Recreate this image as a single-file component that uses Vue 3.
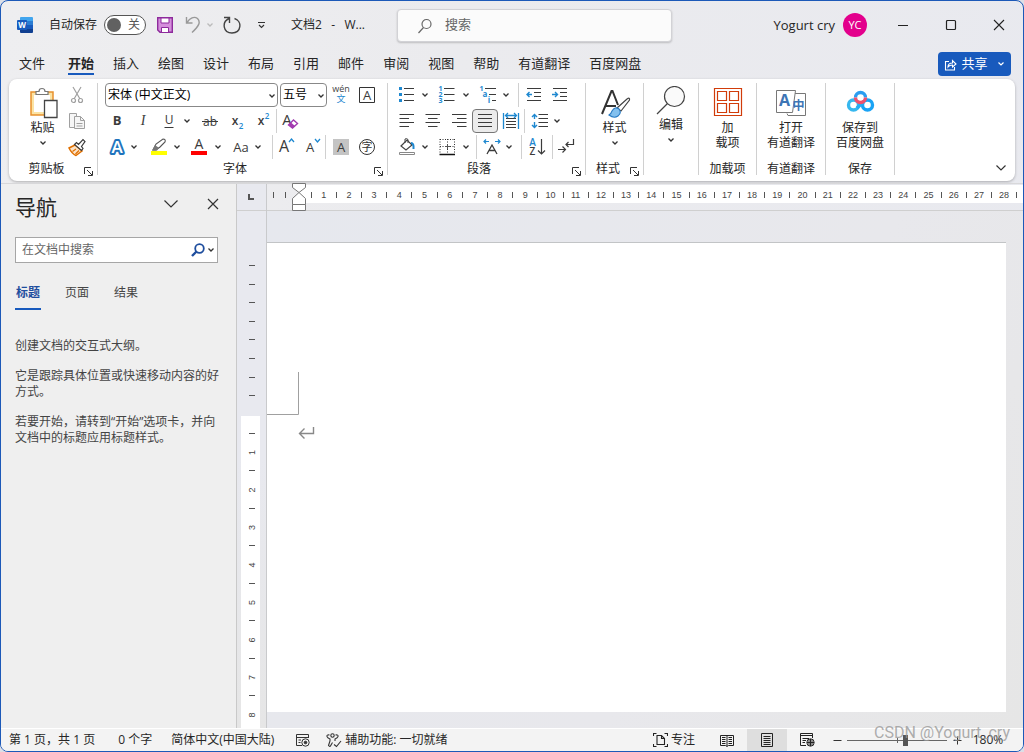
<script setup>
import { ref } from 'vue'

const K = '#3b3b3b'
const B = '#1e88d0'
const UI = 'font-family="Open Sans, Noto Sans, sans-serif"'
const CJK = 'font-family="Noto Sans CJK SC, sans-serif"'
const line = (d, c = K, w = 1.2) => `<path d="${d}" fill="none" stroke="${c}" stroke-width="${w}"/>`
const glyph = (t, x, y, size, extra = '', c = K) =>
  `<text x="${x}" y="${y}" font-size="${size}" fill="${c}" text-anchor="middle" ${UI} ${extra}>${t}</text>`

const icons = {
  cut: line('M8 4L15 16M16 4L9 16', '#a0a0a0') + '<g fill="none" stroke="#a0a0a0" stroke-width="1.2"><circle cx="8.500" cy="17.500" r="2"/><circle cx="15.500" cy="17.500" r="2"/></g>',
  copy: '<g fill="#f6f6f6" stroke="#a0a0a0"><path d="M4.500 4.500H11.500V18.500H4.500Z"/><path d="M9.500 7.500H15.500L19.500 11.500V19.500H9.500Z"/></g>' + line('M15.500 7.500V11.500H19.500M11.500 14.500H17.500M11.500 17H17.500', '#a0a0a0', 1),
  brush: '<path d="M4 13L10 10L17 16L11 20.500Q7 19 4 13Z" fill="#fbe3c8" stroke="#e07000" stroke-width="1.500"/>' + line('M7.500 16.500L11 14M10.500 19L14 15.500', '#e07000') + '<path d="M9.500 9.500L11.500 7.500L13.500 9.500L18 4.500L20 6.500L16.500 11.500L18 13.500L16.500 15.500Z" fill="#fff" stroke="#3b3b3b" stroke-width="1.200"/>',
  wen: glyph('wén', 12, 9, 9, '', '#444') + `<text x="12" y="19" font-size="9" fill="${B}" text-anchor="middle" ${CJK}>文</text>`,
  abox: line('M4.500 4.500H19.500V19.500H4.500Z', '#333', 1) + glyph('A', 12, 17, 13),
  bold: glyph('B', 12, 16, 13, 'font-weight="700"'),
  italic: `<text x="12" y="16" font-size="14" fill="${K}" text-anchor="middle" font-style="italic" font-family="Liberation Serif, serif">I</text>`,
  underline: glyph('U', 12, 15, 12) + line('M7.500 18.500H16.500', K, 1),
  strike: glyph('ab', 13, 17, 12) + line('M5 12.500H21', K, 1),
  sub: glyph('x', 9, 16, 12, 'font-weight="600"') + glyph('2', 15, 20, 8, 'font-weight="600"', B),
  sup: glyph('x', 10, 16, 12, 'font-weight="600"') + glyph('2', 16, 10, 8, 'font-weight="600"', B),
  clear: glyph('A', 9, 16, 15) + '<path d="M10.500 16L15.500 11L19.500 14.500L14.500 19Z" fill="#fff" stroke="#a23bb0" stroke-width="1.400"/><path d="M10.500 16L13 13.500L17 17L14.500 19Z" fill="#a23bb0"/>',
  effect: glyph('A', 12, 18, 17, `font-weight="600" stroke="#1f74bd" stroke-width="4" paint-order="stroke" stroke-linejoin="round"`, '#fff'),
  highlight: '<path d="M4 20H20V16H4Z" fill="#ffff00"/><path d="M6 15L9 9L16 4Q19 4 18 7L13 12L9 15Z" fill="#fff" stroke="#555" stroke-width="1.100"/><path d="M5 15.500L8 10L12 13L10 15.500Z" fill="#777"/>',
  color: glyph('A', 12, 14, 14) + '<path d="M4 16H20V20H4Z" fill="#ff0000"/>',
  aa: glyph('Aa', 12, 17, 13),
  grow: glyph('A', 10, 17, 16) + line('M15 7L17.500 4L20 7', B, 1.3),
  shrink: glyph('A', 10, 17, 13) + line('M15 4L17.500 7L20 4', B, 1.3),
  shade: '<path d="M4 4H20V20H4Z" fill="#c4c4c4"/>' + glyph('A', 12, 17, 13),
  circled: '<circle cx="12" cy="12" r="7.500" fill="none" stroke="#333"/>' + `<text x="12" y="16" font-size="11" fill="#333" text-anchor="middle" ${CJK}>字</text>`,
  bullets: `<path d="M4 4h3v3h-3zM4 10h3v3h-3zM4 16h3v3h-3z" fill="${B}"/>` + line('M9 5.500H19M9 11.500H19M9 17.500H19'),
  numbers: glyph('1', 5.5, 8, 7, 'font-weight="700"', B) + glyph('2', 5.5, 14, 7, 'font-weight="700"', B) + glyph('3', 5.5, 20, 7, 'font-weight="700"', B) + line('M9 5.500H19.500M9 11.500H19.500M9 17.500H19.500'),
  multi: glyph('1', 4.5, 8, 7, 'font-weight="700"', B) + glyph('a', 8, 14, 8, 'font-weight="700"', B) + glyph('i', 12, 20, 8, 'font-weight="700"', B) + line('M8 5.500H19M12 11.500H19M15 17.500H19'),
  outdent: line('M5 5.500H19M12 9.500H19M12 13.500H19M5 17.500H19') + line('M10 11.500H5M7.500 9L5 11.500L7.500 14', B, 1.4),
  indent: line('M5 5.500H19M12 9.500H19M12 13.500H19M5 17.500H19') + line('M4 11.500H9.500M7 9L9.500 11.500L7 14', B, 1.4),
  left: line('M4.500 5.500H19M4.500 9.500H14M4.500 13.500H19M4.500 17.500H14'),
  center: line('M4.500 5.500H19M7 9.500H16.500M4.500 13.500H19M7 17.500H16.500'),
  right: line('M5 5.500H19.500M10 9.500H19.500M5 13.500H19.500M10 17.500H19.500'),
  justify: line('M5 5.500H19M5 9.500H19M5 13.500H19M5 17.500H19'),
  spread: line('M7 9.500H17M7 12.500H17M7 15.500H17M7 18.500H17') + line('M4.500 4V20M19.500 4V20M6.500 6.500H17.500M9 4L6.500 6.500L9 9M15 4L17.500 6.500L15 9', B, 1.3),
  spacing: line('M10.500 5.500H20M10.500 9.500H20M10.500 13.500H20M10.500 17.500H20') + line('M6.500 5.500V10M4 8L6.500 5.500L9 8M6.500 13V18.500M4 16L6.500 18.500L9 16', B, 1.4),
  paint: '<path d="M4.500 17.500H19.500V19.500H4.500Z" fill="#fff" stroke="#888"/><path d="M6 11L12 5L17 10L11 15Z" fill="#fff" stroke="#444" stroke-width="1.200"/>' + line('M10 8V4Q11.500 3 13 4.500V8', '#444', 1) + line('M16 8Q19 8 18.500 14', B, 2),
  borders: line('M5 4.500H20M5 4V19M19.500 4V19M12.500 4V19M5 11.500H20', '#333', 1).replace('/>', ' stroke-dasharray="1 1.500"/>') + line('M10 11.500H15M12.500 9V14', '#555', 1) + line('M4.500 19.500H20', '#111', 1.6),
  asian: line('M7 19L12 10L17 19M9 15.500H15', K, 1.3) + line('M4 6.500H9M6 4.500L4 6.500L6 8.500M20 6.500H15M18 4.500L20 6.500L18 8.500', B, 1.2),
  sort: glyph('A', 7.5, 11, 10, 'font-weight="600"', B) + glyph('Z', 7.5, 20, 10, 'font-weight="600"') + line('M16.500 4V19M13 15.500L16.500 19L20 15.500'),
  marks: line('M4 14.500H11M8.500 11.500L11.500 14.500L8.500 17.500M19.500 4V9.500H12M14.500 7L12 9.500L14.500 12'),
}

const fontRow2 = 'bold:26 italic:26 underline:26 chev:10 strike:34 sub:24 sup:26 | clear:26'
const fontRow3 = 'effect:26 chev:8 _:8 highlight:26 chev:10 _:4 color:26 chev:12 _:4 aa:26 chev:8 _:10 | grow:26 shrink:26 | _:2 shade:26 circled:26'
const paraRow1 = 'bullets:26 chev:10 _:4 numbers:26 chev:12 _:4 multi:26 chev:8 _:8 | _:2 outdent:26 indent:26'
const paraRow2 = 'left:26 center:26 right:26 justify:26 spread:26 | _:2 spacing:26 chev:8'
const paraRow3 = 'paint:26 chev:10 _:4 borders:26 chev:12 _:4 | _:2 asian:26 chev:8 _:8 | _:2 sort:26 _:2 | marks:26'
const parse = (s) => s.split(' ').map((t) => {
  if (t === '|') return { type: 'rule' }
  const [name, w] = t.split(':')
  return { type: name === '_' ? 'space' : name === 'chev' ? 'chev' : 'tool', name, cls: 'w' + w }
})
const fontRows = [fontRow2, fontRow3].map(parse)
const paraRows = [paraRow1, paraRow2, paraRow3].map(parse)

const tabs = ['文件', '开始', '插入', '绘图', '设计', '布局', '引用', '邮件', '审阅', '视图', '帮助', '有道翻译', '百度网盘']
const activeTab = ref('开始')
const navTabs = ['标题', '页面', '结果']
const activeNav = ref('标题')
const pressed = ref('justify')
const autosave = ref(false)
const zoom = ref(59)

const origin = 32
const unit = 25.2
const hNumbers = Array.from({ length: 28 }, (_, i) => ({ n: i + 1, x: origin + unit * (i + 1) - 0.5 }))
const hTicks = Array.from({ length: 29 }, (_, i) => Math.round(origin + unit * (i + 0.5) - 1) + 0.5)
const vOrigin = 204
const vUnit = 37.5
const vNumbers = Array.from({ length: 8 }, (_, i) => ({ n: i + 1, y: vOrigin + vUnit * (i + 1) }))
const vTicks = Array.from({ length: 8 }, (_, i) => Math.round(vOrigin + vUnit * (i + 0.5)) - 0.5)
const vTop = Array.from({ length: 8 }, (_, i) => Math.round(54 + 18.6 * i) + 0.5)
</script>

<template>
  <div class="window">
    <header class="titlebar">
      <div class="quick">
        <svg class="logo" viewBox="0 0 16 16" width="16" height="16">
          <path d="M4 0H15Q16 0 16 1V4H3V1Q3 0 4 0Z" fill="#41a5ee" />
          <path d="M3 4H16V8H3Z" fill="#2b7cd3" />
          <path d="M3 8H16V12H3Z" fill="#185abd" />
          <path d="M3 12H16V15Q16 16 15 16H4Q3 16 3 15Z" fill="#103f91" />
          <rect x="0" y="3" width="10" height="10" rx="1" fill="#185abd" />
          <text x="5" y="11" font-size="8" font-weight="700" fill="#fff" text-anchor="middle" font-family="Open Sans, sans-serif">W</text>
        </svg>
        <label class="autosave">
          <span>自动保存</span>
          <input v-model="autosave" type="checkbox" />
          <span class="switch"><i class="knob"></i>关</span>
        </label>
        <button class="qbtn save" aria-label="保存">
          <svg viewBox="0 0 16 16" width="16" height="16">
            <path d="M0.700 0.700H15.300V15.300H3L0.700 13Z" fill="#d58fdc" stroke="#8e2b9c" stroke-width="1.400" />
            <path d="M4 1H12V6H4Z" fill="#fff" stroke="#8e2b9c" />
            <path d="M4.500 15V10.500H11.500V15" fill="#fff" stroke="#8e2b9c" />
          </svg>
        </button>
        <button class="qbtn undo" aria-label="撤消">
          <svg viewBox="0 0 17 18" width="17" height="18" fill="none" stroke="#999" stroke-width="1.400">
            <path d="M1.500 1V7H7.500M2 6.500C5 2 9 0 12.500 2.500C16 6 14 10 7 16.500" />
          </svg>
        </button>
        <button class="qbtn drop" aria-label="撤消选项">
          <svg viewBox="0 0 8 6" width="8" height="6" fill="none" stroke="#bbb" stroke-width="1.300"><path d="M1.500 1.500L4 4L6.500 1.500" /></svg>
        </button>
        <button class="qbtn redo" aria-label="重复">
          <svg viewBox="0 0 18 18" width="18" height="18" fill="none" stroke="#444" stroke-width="1.400">
            <path d="M1 1.500H6.500V7M6 2.500C-1.500 6 0 17 9 17C18.500 17 19.500 5 11.500 2.500" />
          </svg>
        </button>
        <button class="qbtn more" aria-label="自定义快速访问工具栏">
          <svg viewBox="0 0 9 8" width="9" height="8" fill="none" stroke="#333" stroke-width="1.100"><path d="M1 1.500H8M2 4L4.500 6.500L7 4" /></svg>
        </button>
        <span class="doc">文档2&nbsp;&nbsp; -&nbsp;&nbsp; W...</span>
      </div>
      <label class="search">
        <svg viewBox="0 0 14 16" width="14" height="16" fill="none" stroke="#666" stroke-width="1.200"><circle cx="8.500" cy="6" r="4.500" /><path d="M5.500 9.500L0.500 15" /></svg>
        <input type="text" placeholder="搜索" aria-label="搜索" />
      </label>
      <div class="account">
        <span>Yogurt cry</span>
        <button class="avatar">YC</button>
        <button class="win" aria-label="最小化"><svg width="12" height="12" viewBox="0 0 12 12"><path d="M1 6.500H11" stroke="#222" /></svg></button>
        <button class="win" aria-label="最大化"><svg width="12" height="12" viewBox="0 0 12 12"><rect x="1.500" y="1.500" width="9" height="9" rx="1" fill="none" stroke="#222" stroke-width="1.200" /></svg></button>
        <button class="win" aria-label="关闭"><svg width="12" height="12" viewBox="0 0 12 12"><path d="M1 1L11 11M11 1L1 11" stroke="#222" stroke-width="1.100" /></svg></button>
      </div>
    </header>

    <nav class="tabs">
      <button v-for="t in tabs" :key="t" class="tab" :class="{ active: t === activeTab }" @click="activeTab = t">{{ t }}</button>
      <button class="share">
        <svg viewBox="0 0 13 13" width="13" height="13" fill="none" stroke="#fff" stroke-width="1.100">
          <path d="M5 3.500H1.500V12H10.500V9M4 9C4 6 6 5 8.500 5V2.500L12 6L8.500 9V7C6.500 7 5 7.500 4 9Z" />
        </svg>
        <span>共享</span>
        <svg viewBox="0 0 8 6" width="8" height="6" fill="none" stroke="#fff" stroke-width="1.200"><path d="M1.500 1.500L4 4L6.500 1.500" /></svg>
      </button>
    </nav>

    <section class="ribbon">
      <div class="group clipboard">
        <div class="body">
          <button class="big">
            <svg class="paste" viewBox="0 0 28 32" width="28" height="32">
              <path d="M1 5H23V28H1Z" fill="#fbe3a4" stroke="#e8912d" stroke-width="1.500" />
              <path d="M4 8H20V25H4Z" fill="#fff" />
              <path d="M6 7.500V4.500H9Q9 1.500 12 1.500Q15 1.500 15 4.500H18V7.500Z" fill="#fff" stroke="#777" stroke-width="1.200" />
              <path d="M14.500 13.500H27V30.500H14.500Z" fill="#fff" stroke="#444" stroke-width="1.300" />
            </svg>
            <span>粘贴</span>
            <svg class="chev" viewBox="0 0 8 6" width="8" height="6"><path d="M1.500 1.500L4 4L6.500 1.500" /></svg>
          </button>
          <div class="stack">
            <button class="tool w26" aria-label="剪切"><svg viewBox="0 0 24 24" width="24" height="24" v-html="icons.cut"></svg></button>
            <button class="tool w26" aria-label="复制"><svg viewBox="0 0 24 24" width="24" height="24" v-html="icons.copy"></svg></button>
            <button class="tool w26" aria-label="格式刷"><svg viewBox="0 0 24 24" width="24" height="24" v-html="icons.brush"></svg></button>
          </div>
        </div>
        <footer><span>剪贴板</span><button class="launch" aria-label="剪贴板设置"><svg viewBox="0 0 9 9" width="9" height="9"><path d="M0.500 7V0.500H7M3 3L8 8M8.500 4V8.500H4" /></svg></button></footer>
      </div>

      <div class="group font">
        <div class="rows">
          <div class="row">
            <span class="combo family"><select aria-label="字体"><option>宋体 (中文正文)</option></select><svg class="chev" viewBox="0 0 8 6" width="8" height="6"><path d="M1.500 1.500L4 4L6.500 1.500" /></svg></span>
            <span class="combo size"><select aria-label="字号"><option>五号</option></select><svg class="chev" viewBox="0 0 8 6" width="8" height="6"><path d="M1.500 1.500L4 4L6.500 1.500" /></svg></span>
            <button class="tool w26" aria-label="拼音指南"><svg viewBox="0 0 24 24" width="24" height="24" v-html="icons.wen"></svg></button>
            <button class="tool w26" aria-label="字符边框"><svg viewBox="0 0 24 24" width="24" height="24" v-html="icons.abox"></svg></button>
          </div>
          <div v-for="(row, r) in fontRows" :key="r" class="row">
            <template v-for="(it, i) in row" :key="i">
              <i v-if="it.type === 'rule'" class="rule"></i>
              <i v-else-if="it.type === 'space'" :class="it.cls"></i>
              <button v-else-if="it.type === 'chev'" class="tool" :class="it.cls" aria-label="选项"><svg class="chev" viewBox="0 0 8 6" width="8" height="6"><path d="M1.500 1.500L4 4L6.500 1.500" /></svg></button>
              <button v-else class="tool" :class="it.cls" :aria-label="it.name"><svg viewBox="0 0 24 24" width="24" height="24" v-html="icons[it.name]"></svg></button>
            </template>
          </div>
        </div>
        <footer><span>字体</span><button class="launch" aria-label="字体设置"><svg viewBox="0 0 9 9" width="9" height="9"><path d="M0.500 7V0.500H7M3 3L8 8M8.500 4V8.500H4" /></svg></button></footer>
      </div>

      <div class="group para">
        <div class="rows">
          <div v-for="(row, r) in paraRows" :key="r" class="row">
            <template v-for="(it, i) in row" :key="i">
              <i v-if="it.type === 'rule'" class="rule"></i>
              <i v-else-if="it.type === 'space'" :class="it.cls"></i>
              <button v-else-if="it.type === 'chev'" class="tool" :class="it.cls" aria-label="选项"><svg class="chev" viewBox="0 0 8 6" width="8" height="6"><path d="M1.500 1.500L4 4L6.500 1.500" /></svg></button>
              <button v-else class="tool" :class="[it.cls, { pressed: it.name === pressed }]" :aria-label="it.name"><svg viewBox="0 0 24 24" width="24" height="24" v-html="icons[it.name]"></svg></button>
            </template>
          </div>
        </div>
        <footer><span>段落</span><button class="launch" aria-label="段落设置"><svg viewBox="0 0 9 9" width="9" height="9"><path d="M0.500 7V0.500H7M3 3L8 8M8.500 4V8.500H4" /></svg></button></footer>
      </div>

      <div class="group styles">
        <button class="big">
          <svg viewBox="0 0 32 32" width="32" height="32">
            <path d="M3 27L12.500 4H13.500L19 18M6.500 19H17" fill="none" stroke="#333" stroke-width="2" />
            <path d="M18 21L28 12Q31 10 30.500 13L22 24Z" fill="#fff" stroke="#444" stroke-width="1.200" />
            <path d="M10 28Q12 27 13 24Q16 19 20 22Q23 26 19 29Q15 32 10 28Z" fill="#83c0ee" stroke="#2b7cc4" stroke-width="1.100" />
          </svg>
          <span>样式</span>
          <svg class="chev" viewBox="0 0 8 6" width="8" height="6"><path d="M1.500 1.500L4 4L6.500 1.500" /></svg>
        </button>
        <footer><span>样式</span><button class="launch" aria-label="样式设置"><svg viewBox="0 0 9 9" width="9" height="9"><path d="M0.500 7V0.500H7M3 3L8 8M8.500 4V8.500H4" /></svg></button></footer>
      </div>

      <div class="group edit">
        <button class="big">
          <svg viewBox="0 0 30 30" width="30" height="30">
            <circle cx="18.500" cy="10.500" r="10" fill="#fafafa" stroke="#444" stroke-width="1.200" />
            <path d="M11.500 17.500L1 28" stroke="#444" stroke-width="1.300" />
          </svg>
          <span>编辑</span>
          <svg class="chev" viewBox="0 0 8 6" width="8" height="6"><path d="M1.500 1.500L4 4L6.500 1.500" /></svg>
        </button>
      </div>

      <div class="group addin">
        <button class="big">
          <svg viewBox="0 0 32 32" width="32" height="32" fill="none" stroke="#d13c0a" stroke-width="1.200">
            <path d="M2.500 1.500H29.500V28.500H2.500Z M5.500 4.500H14.500V13.500H5.500Z M17.500 4.500H26.500V13.500H17.500Z M5.500 16.500H14.500V25.500H5.500Z M17.500 16.500H26.500V25.500H17.500Z" />
          </svg>
          <span>加<br />载项</span>
        </button>
        <footer><span>加载项</span></footer>
      </div>

      <div class="group youdao">
        <button class="big">
          <svg viewBox="0 0 32 32" width="32" height="32">
            <path d="M12 26.500L13 28.500H30.500V6.500H20" fill="#fff" stroke="#777" />
            <path d="M1.500 3.500H20.500L17.500 25.500H1.500Z" fill="#fff" stroke="#777" />
            <text x="9.500" y="19" font-size="16" font-weight="700" fill="#3d75b5" text-anchor="middle" font-family="Open Sans, sans-serif">A</text>
            <text x="23.500" y="23" font-size="12" font-weight="700" fill="#3d75b5" text-anchor="middle" font-family="Noto Sans CJK SC, sans-serif">中</text>
          </svg>
          <span>打开<br />有道翻译</span>
        </button>
        <footer><span>有道翻译</span></footer>
      </div>

      <div class="group baidu">
        <button class="big">
          <svg viewBox="0 0 32 32" width="32" height="32" fill="none" stroke-width="3.400">
            <circle cx="9.500" cy="18" r="5" stroke="#36b7ee" />
            <circle cx="23.500" cy="18" r="5" stroke="#1aa3f5" />
            <path d="M11.500 10.500A5 5 0 0 1 21.500 10.500" stroke="#2b9df0" />
            <path d="M13 21L20 14.500" stroke="#25acf2" />
            <path d="M11.500 10.500A5 5 0 0 0 21.500 10.500" stroke="#f0506e" />
          </svg>
          <span>保存到<br />百度网盘</span>
        </button>
        <footer><span>保存</span></footer>
      </div>

      <button class="collapse" aria-label="折叠功能区"><svg viewBox="0 0 12 8" width="12" height="8" fill="none" stroke="#333" stroke-width="1.200"><path d="M1.500 1.500L6 6L10.500 1.500" /></svg></button>
    </section>

    <main class="work">
      <aside class="pane">
        <div class="pane-head">
          <h2>导航</h2>
          <button aria-label="任务窗格选项"><svg viewBox="0 0 16 12" width="16" height="12" fill="none" stroke="#333" stroke-width="1.200"><path d="M1.500 2.500L8 9L14.500 2.500" /></svg></button>
          <button aria-label="关闭"><svg viewBox="0 0 12 12" width="12" height="12" fill="none" stroke="#333" stroke-width="1.200"><path d="M1 1L11 11M11 1L1 11" /></svg></button>
        </div>
        <div class="pane-search">
          <input type="text" placeholder="在文档中搜索" aria-label="在文档中搜索" />
          <button aria-label="搜索">
            <svg viewBox="0 0 14 14" width="14" height="14" fill="none" stroke="#1f4e9e"><circle cx="8.500" cy="5.500" r="4.300" stroke-width="1.800" /><path d="M5.500 8.500L1 13" stroke-width="2.400" /></svg>
            <svg class="chev" viewBox="0 0 8 6" width="8" height="6"><path d="M1.500 1.500L4 4L6.500 1.500" /></svg>
          </button>
        </div>
        <div class="pane-tabs">
          <button v-for="t in navTabs" :key="t" :class="{ active: t === activeNav }" @click="activeNav = t">{{ t }}</button>
        </div>
        <div class="help">
          <p>创建文档的交互式大纲。</p>
          <p>它是跟踪具体位置或快速移动内容的好方式。</p>
          <p>若要开始，请转到“开始”选项卡，并向文档中的标题应用标题样式。</p>
        </div>
      </aside>

      <div class="vcol">
        <button class="corner" aria-label="制表符"><svg viewBox="0 0 8 8" width="8" height="8"><path d="M1 1V6H6" fill="none" stroke="#555" stroke-width="2" /></svg></button>
        <svg class="vruler">
          <rect x="4" :y="vOrigin + 1" width="19" height="100%" fill="#fff" />
          <path v-for="y in vTop" :key="'a' + y" :d="`M12 ${y}H18`" stroke="#555" />
          <path v-for="y in vTicks" :key="'b' + y" :d="`M12 ${y}H18`" stroke="#555" />
          <text v-for="v in vNumbers" :key="v.n" :transform="`translate(18 ${v.y}) rotate(-90)`" class="num">{{ v.n }}</text>
        </svg>
      </div>

      <div class="canvas">
        <svg class="hruler">
          <rect :x="origin" y="1" width="100%" height="18" fill="#fff" />
          <path d="M6.500 8V14M18.500 8V14" stroke="#555" />
          <path v-for="x in hTicks" :key="x" :d="`M${x} 8V14`" stroke="#555" />
          <text v-for="h in hNumbers" :key="h.n" :x="h.x" y="14" class="num">{{ h.n }}</text>
          <g fill="#fff" stroke="#777">
            <path d="M25.500 -0.500H38.500V3.500L32 8.500L25.500 3.500Z" />
            <path d="M32 8.500L38.500 14.500V20.500H25.500V14.500Z" />
            <path d="M25.500 20.500H38.500V26.500H25.500Z" />
          </g>
        </svg>
        <div class="desk">
          <article class="paper">
            <svg viewBox="0 0 50 200" width="50" height="200" fill="none">
              <path d="M0 171.500H31.500V129" stroke="#a0a0a0" />
              <path d="M46.500 184V190.500H33M37.500 185.500L32.500 190.500L37.500 195.500" stroke="#888" stroke-width="1.400" />
            </svg>
          </article>
        </div>
      </div>
    </main>

    <footer class="status">
      <button class="s1">第 1 页，共 1 页</button>
      <button class="s2">0 个字</button>
      <button class="s3">简体中文(中国大陆)</button>
      <button class="s4" aria-label="宏"><svg viewBox="0 0 15 14" width="15" height="14" fill="none" stroke="#333"><path d="M7 12.500H1.500V1.500H13.500V5M1.500 4.500H13M3.500 7H6M3.500 9.500H5.500" /><circle cx="10.500" cy="9.500" r="3.700" /><circle cx="10.500" cy="9.500" r="1.300" fill="#333" /></svg></button>
      <button class="s5"><svg viewBox="0 0 16 15" width="16" height="15" fill="none" stroke="#333" stroke-width="1.100"><circle cx="6.500" cy="2.500" r="1.700" /><path d="M3.500 2Q0.500 1.500 1 3.500Q1.500 5 4 6V8L2.500 12.500Q4 14.500 5 12L6.500 9.500M9.500 2Q12.500 1.500 12 3.500Q11.500 5 9 6V8M8 11.500L10.500 13.500L15 8" /></svg>辅助功能: 一切就绪</button>
      <div class="views">
        <button class="focus"><svg viewBox="0 0 15 14" width="15" height="14" fill="none" stroke="#222" stroke-width="1.100"><path d="M3.500 0.500H0.500V3M0.500 11V13.500H3.500M11.500 0.500H14.500V3M14.500 11V13.500H11.500M4 2.500H8.500L11.500 5.500V11.500H4ZM8.500 2.500V5.500H11.500" /></svg>专注</button>
        <button class="view" aria-label="阅读视图"><svg viewBox="0 0 14 13" width="14" height="13" fill="none" stroke="#222"><path d="M7 12V1.500M7 1.500H0.500V11.500H5.500L7 12.500L8.500 11.500H13.500V1.500H7M2 3.500H5.500M2 5.500H5.500M2 7.500H5.500M2 9.500H5.500M8.500 3.500H12M8.500 5.500H12M8.500 7.500H12M8.500 9.500H12" /></svg></button>
        <button class="view on" aria-label="页面视图"><svg viewBox="0 0 12 14" width="12" height="14" fill="none" stroke="#222"><path d="M0.500 0.500H11.500V13.500H0.500ZM2.500 3.500H9.500M2.500 5.500H9.500M2.500 7.500H9.500M2.500 9.500H9.500M2.500 11.500H9.500" /></svg></button>
        <button class="view" aria-label="Web 版式视图"><svg viewBox="0 0 15 14" width="15" height="14" fill="none" stroke="#222"><path d="M6 12.500H0.500V0.500H12.500V5M0.500 2.500H12M2.500 5.500H9M2.500 7.500H6M2.500 9.500H5" /><circle cx="10.500" cy="9.500" r="3.700" /><path d="M7 9.500H14M10.500 6V13M9 6.500V12.500M12 6.500V12.500" /></svg></button>
        <button class="zoom" aria-label="缩小"><svg viewBox="0 0 9 9" width="9" height="9"><path d="M0.500 4.500H8.500" stroke="#333" /></svg></button>
        <input v-model="zoom" class="slider" type="range" min="0" max="100" aria-label="缩放" />
        <button class="zoom" aria-label="放大"><svg viewBox="0 0 9 9" width="9" height="9"><path d="M0.500 4.500H8.500M4.500 0.500V8.500" stroke="#333" /></svg></button>
        <button class="pct">180%</button>
      </div>
    </footer>
    <div class="watermark">CSDN @Yogurt_cry</div>
  </div>
</template>

<style>
body {
  margin: 0;
  background: #dcdfe6;
}
</style>

<style scoped>
.window {
  position: relative;
  box-sizing: border-box;
  display: flex;
  flex-direction: column;
  height: 100vh;
  border: 1px solid #1c59b8;
  border-radius: 8px;
  overflow: hidden;
  background: linear-gradient(100deg, #eeeef0 0%, #ebebee 40%, #e8e9ef 100%);
  font: 12px/16px "Open Sans", "Noto Sans CJK SC", sans-serif;
  color: #262626;
}
button {
  display: flex;
  align-items: center;
  justify-content: center;
  padding: 0;
  border: 0;
  background: none;
  font: inherit;
  color: inherit;
  white-space: nowrap;
}
input, select { font: inherit; color: inherit; outline: 0; }
svg { display: block; flex: none; }
.chev { fill: none; stroke: #333; stroke-width: 1.3px; }

.titlebar { display: flex; flex: none; height: 48px; }
.quick { display: flex; align-items: center; width: 396px; padding-left: 16px; flex: none; box-sizing: border-box; }
.autosave { display: flex; align-items: center; gap: 7px; margin-left: 16px; }
.autosave input { position: absolute; opacity: 0; }
.switch {
  display: flex;
  align-items: center;
  justify-content: space-between;
  box-sizing: border-box;
  width: 42px;
  height: 20px;
  padding: 0 5px 0 2px;
  border: 1px solid #555;
  border-radius: 10px;
  background: #fff;
  color: #555;
}
.knob { width: 14px; height: 14px; border-radius: 50%; background: #616161; }
.save { margin-left: 11px; }
.undo { margin-left: 12px; }
.drop { margin-left: 4px; }
.redo { margin-left: 9px; }
.more { margin-left: 16px; }
.doc { margin-left: 25px; white-space: nowrap; }
.search {
  display: flex;
  align-items: center;
  gap: 13px;
  flex: 0 1 275px;
  box-sizing: border-box;
  height: 33px;
  margin-top: 8px;
  padding-left: 20px;
  border: 1px solid #d2d2d6;
  border-radius: 4px;
  background: #fbfbfb;
  box-shadow: 0 1px 2px #0003;
}
.search input { flex: 1; min-width: 0; padding: 0 0 4px; border: 0; background: none; font-size: 13px; }
.search input::placeholder { color: #666; opacity: 1; }
.account { display: flex; align-items: center; margin-left: auto; }
.account > span { font-size: 13px; margin-right: 8px; }
.avatar { width: 24px; height: 24px; margin-right: 12px; border-radius: 50%; background: #e3008c; color: #fff; font-size: 11px; }
.win { width: 48px; height: 48px; }

.tabs { display: flex; flex: none; gap: 19px; height: 30px; padding: 0 12px 0 18px; box-sizing: border-box; font-size: 13px; }
.tab { height: 26px; padding-top: 4px; box-sizing: border-box; border-bottom: 2px solid transparent; }
.tab:first-child { margin-right: 4px; }
.tab.active { border-color: #185abd; font-weight: 700; }
.share { width: 73px; height: 24px; margin: 3px 0 0 auto; gap: 4px; border-radius: 4px; background: #185abd; color: #fff; }
.share span { padding-bottom: 2px; }
.share svg:last-child { margin-left: 5px; }

.ribbon {
  display: flex;
  flex: none;
  height: 102px;
  box-sizing: border-box;
  margin: 0 8px 2px;
  padding: 4px 0 6px;
  border-radius: 8px;
  background: #fff;
  box-shadow: 0 1px 3px #0004;
}
.group { display: flex; flex-direction: column; box-sizing: border-box; border-right: 1px solid #d0d0d0; }
.group > footer { display: flex; align-items: center; margin-top: auto; height: 12px; }
.group > footer span { flex: 1; text-align: center; line-height: 16px; white-space: nowrap; }
.launch { width: 9px; height: 9px; margin: 4px 4px 0 0; }
.launch path { fill: none; stroke: #333; }
.clipboard { width: 89px; }
.font { width: 290px; padding-left: 6px; }
.para { width: 198px; padding-left: 6px; }
.font > footer, .para > footer { margin-left: -8px; }
.styles { width: 58px; }
.edit { width: 55px; }
.addin { width: 58px; }
.youdao, .baidu { width: 69px; }
.body { display: flex; gap: 6px; padding-left: 18px; }
.paste { margin-left: 3px; }
.stack, .rows { display: flex; flex-direction: column; gap: 2px; }
.row { display: flex; height: 24px; }
.tool { height: 24px; flex: none; }
.pressed { box-sizing: border-box; border: 1px solid #777; border-radius: 4px; background: #ebebeb; }
.rule { width: 1px; flex: none; background: #d0d0d0; }
.w2 { width: 2px; }
.w4 { width: 4px; }
.w8 { width: 8px; }
.w10 { width: 10px; }
.w12 { width: 12px; }
.w24 { width: 24px; }
.w26 { width: 26px; }
.w34 { width: 34px; }
.combo { position: relative; margin-right: 2px; }
.combo select {
  width: 100%;
  height: 24px;
  box-sizing: border-box;
  padding: 0 2px;
  border: 1px solid #888;
  border-radius: 4px;
  background: #fff;
  color: #000;
  appearance: none;
}
.combo .chev { position: absolute; right: 2px; top: 10px; pointer-events: none; }
.family { width: 173px; margin-left: 1px; }
.size { width: 47px; }
.size + .tool { margin-left: -1px; }
.big { flex-direction: column; justify-content: flex-start; padding-top: 4px; line-height: 15px; }
.big .chev { margin-top: 5px; }
.big svg:first-child { margin-bottom: 1px; }
.edit .big { padding-top: 3px; }
.collapse { align-self: flex-end; margin: 0 8px 3px auto; }

.work { display: flex; flex: 1; min-height: 0; border-top: 1px solid #d8d8da; }
.pane { width: 221px; flex: none; padding: 8px 0 0 14px; background: #efefef; border-right: 1px solid #c9c9c9; }
.pane-head { display: flex; align-items: center; height: 30px; padding-right: 17px; gap: 28px; }
.pane-head h2 { flex: 1; margin: 0; font-size: 21px; font-weight: 400; line-height: 30px; }
.pane-head button { margin-bottom: 6px; }
.pane-search { display: flex; width: 203px; height: 26px; box-sizing: border-box; margin-top: 15px; border: 1px solid #a6a6a6; background: #fff; }
.pane-search input { flex: 1; min-width: 0; padding: 0 6px; border: 0; background: none; }
.pane-search input::placeholder { color: #666; opacity: 1; }
.pane-search button { gap: 2px; padding-right: 2px; }
.pane-tabs { display: flex; gap: 23px; margin-top: 18px; }
.pane-tabs button { height: 29px; box-sizing: border-box; padding: 0 1px 3px; border-bottom: 2px solid transparent; color: #444; }
.pane-tabs .active { border-color: #185abd; color: #1f4e9e; font-weight: 700; }
.help { width: 207px; margin-top: 28px; color: #444; }
.help p { margin: 0 0 14px; }

.vcol { display: flex; flex-direction: column; flex: none; width: 29px; border-right: 1px solid #c9cacc; background: linear-gradient(#e8e9ef 50%, #e6e6e6); }
.corner { flex: none; height: 27px; border-bottom: 1px solid #cfcfcf; }
.vruler { width: 29px; flex: 1; min-height: 0; }
.num { font: 9px "Liberation Sans", sans-serif; fill: #444; text-anchor: middle; }
.canvas { display: flex; flex: 1; flex-direction: column; min-width: 0; }
.hruler { width: 100%; height: 26px; overflow: visible; border-bottom: 1px solid #cfcfcf; }
.desk { display: flex; flex: 1; min-height: 0; padding: 31px 17px 16px 0; background: linear-gradient(120deg, #e6e8ee, #e8e8ec 60%, #e6e6e6); }
.paper { flex: 1; background: #fff; border-top: 1px solid #c2c4c6; overflow: hidden; }

.status { display: flex; flex: none; height: 22px; padding: 0 20px 0 8px; border-top: 1px solid #fff; background: #f3f3f3; }
.status button { flex: none; }
.s2 { margin-left: 23px; }
.s3 { margin-left: 19px; }
.s4 { margin-left: 21px; }
.s5 { margin-left: 16px; gap: 3px; }
.views { display: flex; margin-left: auto; }
.focus { gap: 3px; margin-right: 12px; }
.view { width: 40px; }
.view.on { background: #dedede; }
.zoom { width: 20px; }
.slider {
  width: 100px;
  margin: 0;
  appearance: none;
  background:
    linear-gradient(#666, #666) center / 100% 1px no-repeat,
    linear-gradient(#666, #666) center / 1px 5px no-repeat;
}
.slider::-webkit-slider-thumb { appearance: none; width: 5px; height: 11px; background: #555; }
.pct { width: 30px; margin-left: 6px; }
.watermark { position: absolute; right: 13px; bottom: 8px; color: #999c; font: 16px/20px Roboto, sans-serif; pointer-events: none; }
</style>
